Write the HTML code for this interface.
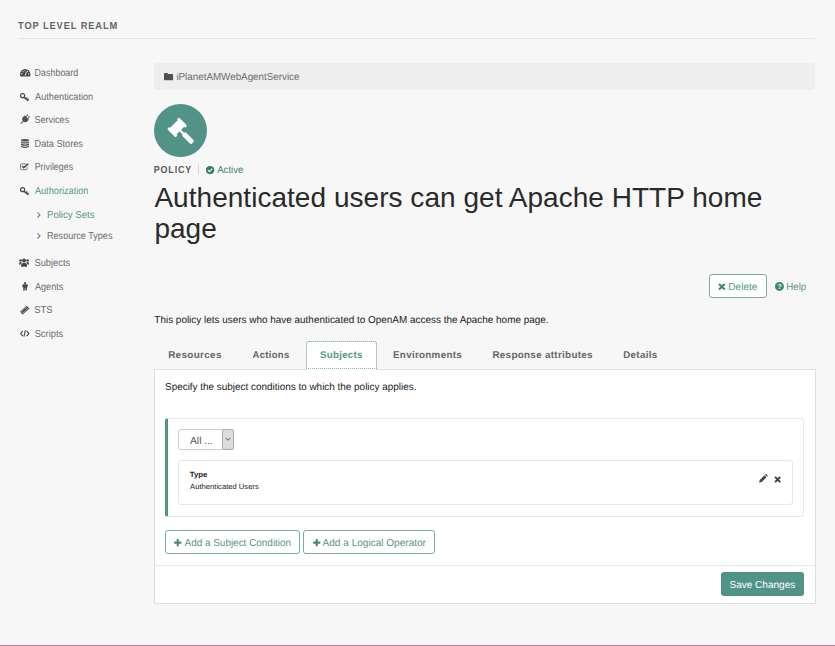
<!DOCTYPE html>
<html lang="en">
<head>
<meta charset="utf-8">
<title>Policy</title>
<style>
*{box-sizing:border-box;}
html,body{margin:0;padding:0;}
body{width:835px;height:646px;overflow:hidden;background:#f7f7f7;font-family:"Liberation Sans",Arial,sans-serif;font-size:10.5px;color:#333;position:relative;}
.abs,.t,svg{position:absolute;}
.t{white-space:nowrap;line-height:14px;transform-origin:0 0;display:block;text-rendering:geometricPrecision;}
svg{overflow:visible;}
.hr{left:18px;top:38px;width:797px;height:1px;background:#e6e6e6;}
.crumb{left:154px;top:62.5px;width:661px;height:27px;background:#eeeeee;border-radius:3px;}
.circle{left:154px;top:104px;width:53.4px;height:53.4px;border-radius:50%;background:#519387;}
.sep{left:198px;top:164px;width:1px;height:10.500px;background:#dadada;}
h1{margin:0;font-weight:normal;font-size:28px;line-height:30.7px;color:#2a2a2a;left:154.4px;top:183.2px;width:670px;position:absolute;letter-spacing:.035px;}
.btn{position:absolute;border:1px solid #78ada1;border-radius:3px;background:#fff;}
.tabactive{left:305.5px;top:340.6px;width:71.3px;height:29.6px;background:#fff;border:1px solid #dcdcdc;border-bottom:none;border-radius:3px 3px 0 0;}
.tabout{left:305.5px;top:340.6px;width:71.3px;height:28.6px;border:1px dotted #86b8ad;border-radius:3px 3px 0 0;}
.panel{left:154px;top:369px;width:661.5px;height:235px;background:#fff;border:1px solid #dedede;}
.well{left:165px;top:418px;width:639px;height:98.5px;border:1px solid #e6e6e6;border-left:3px solid #519387;border-radius:3px;background:#fff;}
.sel{left:178px;top:429px;width:56px;height:21px;border:1px solid #cfcfcf;border-radius:3px;background:#fff;}
.selbtn{left:222px;top:429px;width:12px;height:20.5px;border:1px solid #adadad;border-radius:2px;background:#dcdcdc;}
.item{left:178px;top:460px;width:615px;height:45.4px;border:1px solid #e6e6e6;border-radius:3px;background:#fff;}
.foot{left:155px;top:565px;width:659.5px;height:1px;background:#e8e8e8;}
.save{left:721px;top:572.3px;width:83.3px;height:23.8px;background:#519387;border-radius:3px;}
.bottomline{left:0;top:645px;width:835px;height:1px;background:#c97c9b;}
</style>
</head>
<body>
<div class="abs hr"></div>
<div class="abs crumb"></div>
<div class="abs circle"></div>
<div class="abs sep"></div>
<h1>Authenticated users can get Apache HTTP home page</h1>
<div class="btn" style="left:709px;top:274.2px;width:58px;height:24px;"></div>
<div class="abs panel"></div>
<div class="abs tabactive"></div>
<div class="abs tabout"></div>
<div class="abs well"></div>
<div class="abs sel"></div>
<div class="abs selbtn"></div>
<div class="abs item"></div>
<div class="btn" style="left:165px;top:530.4px;width:135px;height:23.6px;"></div>
<div class="btn" style="left:303px;top:530.4px;width:131.8px;height:23.6px;"></div>
<div class="abs foot"></div>
<div class="abs save"></div>
<div class="abs bottomline"></div>

<!-- sidebar icons -->
<svg style="left:19.5px;top:69.4px;width:10.4px;height:7.5px" viewBox="0 0 14 10"><path d="M0 7A7 7 0 0 1 14 7V8.3Q14 10 12.400 10H1.600Q0 10 0 8.300Z" fill="#484848"/><g fill="#f7f7f7"><circle cx="2.400" cy="6.600" r=".8"/><circle cx="3.900" cy="3.600" r=".8"/><circle cx="7" cy="2.300" r=".8"/><circle cx="10.100" cy="3.600" r=".8"/><circle cx="11.600" cy="6.600" r=".8"/><path d="M6.300 8.200L8.200 3.600L9 4L7.700 8.600Z"/></g></svg>
<svg style="left:19.8px;top:92.7px;width:8.8px;height:8.1px" viewBox="0 0 8.8 8.1"><g fill="none" stroke="#484848"><circle cx="2.600" cy="2.650" r="2.050" stroke-width="1.150"/><path d="M3.900 4.100L8.200 7.800" stroke-width="1.450"/><path d="M6.100 5.900L7.400 4.500M7.500 7.100L8.700 5.800" stroke-width="1.200"/></g></svg>
<svg style="left:19.8px;top:115.200px;width:9.600px;height:9.200px" viewBox="0 0 10 10"><g transform="rotate(45 5 5)" fill="#505050"><rect x="3.100" y="-1.200" width="1.100" height="3.400"/><rect x="5.800" y="-1.200" width="1.100" height="3.400"/><path d="M1.700 1.900H8.300V4.300A3.300 3.300 0 0 1 1.700 4.300Z"/><rect x="4.450" y="7" width="1.100" height="4.400"/></g></svg>
<svg style="left:20.700px;top:139.200px;width:8px;height:9.100px" viewBox="0 0 8 9.100"><g fill="#505050"><ellipse cx="4" cy="1.300" rx="4" ry="1.300"/><path d="M0 2.400Q4 4.100 8 2.400V3.700Q4 5.400 0 3.700ZM0 4.600Q4 6.300 8 4.600V5.900Q4 7.600 0 5.900ZM0 6.800Q4 8.500 8 6.800V7.900Q4 10.200 0 7.900Z"/></g></svg>
<svg style="left:20.2px;top:162.6px;width:8.8px;height:7.2px" viewBox="0 0 8.800 7.200"><path d="M6.200 .9H1.500Q.5 .9 .5 1.900V5.700Q.5 6.700 1.500 6.700H6.200Q7.200 6.700 7.200 5.700V4.300" fill="none" stroke="#6a6a6a" stroke-width=".9"/><path d="M2 3L3.700 4.700L8.300 .9" fill="none" stroke="#484848" stroke-width="1.500"/></svg>
<svg style="left:19.8px;top:186.9px;width:8.8px;height:8.1px" viewBox="0 0 8.8 8.1"><g fill="none" stroke="#484848"><circle cx="2.600" cy="2.650" r="2.050" stroke-width="1.150"/><path d="M3.900 4.100L8.200 7.800" stroke-width="1.450"/><path d="M6.100 5.900L7.400 4.500M7.500 7.100L8.700 5.800" stroke-width="1.200"/></g></svg>
<svg style="left:37px;top:212.2px;width:3.6px;height:5.8px" viewBox="0 0 3.6 5.8"><path d="M.4 .3L3 2.900L.4 5.500" fill="none" stroke="#7e7e7e" stroke-width="1.100"/></svg>
<svg style="left:37px;top:233.2px;width:3.6px;height:5.8px" viewBox="0 0 3.6 5.8"><path d="M.4 .3L3 2.900L.4 5.500" fill="none" stroke="#7e7e7e" stroke-width="1.100"/></svg>
<svg style="left:19.3px;top:258px;width:10.2px;height:9.200px" viewBox="0 0 11 9"><g fill="#484848"><circle cx="5.500" cy="2.300" r="2.100"/><path d="M2.200 9Q1.900 4.700 5.500 4.700Q9.100 4.700 8.800 9Z"/><circle cx="1.700" cy="2.200" r="1.400"/><circle cx="9.300" cy="2.200" r="1.400"/><path d="M0 6.600Q-.1 3.900 1.700 3.900Q2.800 3.900 3.200 4.600Q1.900 5.500 1.900 6.600ZM11 6.600Q11.100 3.900 9.300 3.900Q8.200 3.900 7.800 4.600Q9.100 5.500 9.100 6.600Z"/></g></svg>
<svg style="left:21.5px;top:282.2px;width:6.1px;height:8.6px" viewBox="0 0 6 9"><g fill="#484848"><circle cx="3" cy="1.100" r="1.150"/><path d="M.2 3.300Q.2 2.400 1.100 2.400H4.900Q5.800 2.400 5.800 3.300V5.600H4.900V9H3.300V6.200H2.700V9H1.100V5.600H.2Z"/></g></svg>
<svg style="left:19.7px;top:305.6px;width:9.4px;height:8.2px" viewBox="0 0 10 9"><g transform="rotate(-42 5 4.500)"><rect x=".1" y="2.300" width="9.800" height="4.400" rx=".5" fill="#484848"/><rect x="1.700" y="3.300" width="6.600" height="2.400" fill="none" stroke="#f7f7f7" stroke-width=".5"/></g></svg>
<svg style="left:19.7px;top:330.4px;width:9.4px;height:6.9px" viewBox="0 0 10 7.400"><path d="M2.900 .9L.6 3.700L2.900 6.500M7.100 .9L9.400 3.700L7.100 6.500M5.800 .2L4.200 7.200" fill="none" stroke="#484848" stroke-width="1.200"/></svg>

<!-- folder -->
<svg style="left:164.4px;top:72.9px;width:9.1px;height:7.3px" viewBox="0 0 10 8"><path d="M0 1Q0 0 1 0H3.4Q4.400 0 4.400 1H9Q10 1 10 2V7Q10 8 9 8H1Q0 8 0 7Z" fill="#505050"/></svg>
<!-- gavel -->
<svg style="left:0;top:0;width:835px;height:646px" viewBox="0 0 835 646"><g transform="translate(177.200 127.350) rotate(-45)" fill="#fff"><path d="M-8.300 -4.900Q-8.300 -5.900 -7.300 -5.900H-6.200Q-5.300 -5.900 -5.300 -4.600H5.300Q5.300 -5.900 6.200 -5.900H7.300Q8.300 -5.900 8.300 -4.900V4.900Q8.300 5.900 7.300 5.900H6.200Q5.300 5.900 5.300 4.600H-5.300Q-5.300 5.900 -6.200 5.900H-7.300Q-8.300 5.900 -8.300 4.900Z"/><rect x="-1.100" y="4" width="2.200" height="6"/><rect x="-2.500" y="8.600" width="5" height="13.400" rx="1.900"/></g></svg>
<!-- check circle -->
<svg style="left:205.8px;top:165.9px;width:8.2px;height:8.2px" viewBox="0 0 10 10"><circle cx="5" cy="5" r="5" fill="#2f7b6c"/><path d="M2.400 5.100L4.300 7L7.700 3.300" fill="none" stroke="#f7f7f7" stroke-width="1.500"/></svg>
<!-- delete x -->
<svg style="left:718.1px;top:282.9px;width:7.700px;height:7.500px" viewBox="0 0 8 8"><path d="M1 1L7 7M7 1L1 7" stroke="#3f8476" stroke-width="2.100" fill="none"/></svg>
<!-- help -->
<svg style="left:775.1px;top:282.1px;width:8.900px;height:8.900px" viewBox="0 0 10 10"><circle cx="5" cy="5" r="5" fill="#3f8476"/><text x="5" y="8" text-anchor="middle" font-family="Liberation Sans, sans-serif" font-weight="bold" font-size="8.500" fill="#f7f7f7">?</text></svg>
<!-- select arrow -->
<svg style="left:224.9px;top:436.8px;width:6.2px;height:4.4px" viewBox="0 0 6.2 4.400"><path d="M.7 .9L3.100 3.300L5.500 .9" fill="none" stroke="#505050" stroke-width=".95"/></svg>
<!-- pencil -->
<svg style="left:758.9px;top:474.4px;width:8.8px;height:8.6px" viewBox="0 0 9 9"><path d="M0 9L.7 6.200L5.600 1.300L7.700 3.400L2.800 8.300ZM6.200 .7L6.900 0Q7.300 -.2 7.700 .2L8.800 1.300Q9.200 1.700 9 2.100L8.300 2.800Z" fill="#444"/></svg>
<!-- item x -->
<svg style="left:774.2px;top:475.7px;width:7.3px;height:6.9px" viewBox="0 0 8 8"><path d="M1 1L7 7M7 1L1 7" stroke="#3c3c3c" stroke-width="2.100" fill="none"/></svg>
<!-- plus -->
<svg style="left:173.7px;top:538.7px;width:7.5px;height:7.2px" viewBox="0 0 8 8"><path d="M4 0V8M0 4H8" stroke="#468c7d" stroke-width="2.350" fill="none"/></svg>
<svg style="left:313.1px;top:538.7px;width:7.5px;height:7.2px" viewBox="0 0 8 8"><path d="M4 0V8M0 4H8" stroke="#468c7d" stroke-width="2.350" fill="none"/></svg>

<span class="t" style="left:0;top:20px;font-size:10.2px;font-weight:bold;color:#666;letter-spacing:1px;transform:translateX(18.03px) scaleX(0.9090)">TOP LEVEL REALM</span>
<span class="t" style="left:0;top:67px;font-size:10.1px;font-weight:normal;color:#6b6b6b;transform:translateX(34.62px) scaleX(0.8828)">Dashboard</span>
<span class="t" style="left:0;top:91px;font-size:10.1px;font-weight:normal;color:#6b6b6b;transform:translateX(35.11px) scaleX(0.9083)">Authentication</span>
<span class="t" style="left:0;top:114px;font-size:10.1px;font-weight:normal;color:#6b6b6b;transform:translateX(34.51px) scaleX(0.8952)">Services</span>
<span class="t" style="left:0;top:138px;font-size:10.1px;font-weight:normal;color:#6b6b6b;transform:translateX(34.59px) scaleX(0.9065)">Data Stores</span>
<span class="t" style="left:0;top:161px;font-size:10.1px;font-weight:normal;color:#6b6b6b;transform:translateX(34.67px) scaleX(0.8773)">Privileges</span>
<span class="t" style="left:0;top:185px;font-size:10.1px;font-weight:normal;color:#579789;transform:translateX(34.89px) scaleX(0.9094)">Authorization</span>
<span class="t" style="left:0;top:209px;font-size:10.1px;font-weight:normal;color:#579789;transform:translateX(46.97px) scaleX(0.9516)">Policy Sets</span>
<span class="t" style="left:0;top:230px;font-size:10.1px;font-weight:normal;color:#6b6b6b;transform:translateX(47.00px) scaleX(0.8992)">Resource Types</span>
<span class="t" style="left:0;top:257px;font-size:10.1px;font-weight:normal;color:#6b6b6b;transform:translateX(34.42px) scaleX(0.9247)">Subjects</span>
<span class="t" style="left:0;top:281px;font-size:10.1px;font-weight:normal;color:#6b6b6b;transform:translateX(34.98px) scaleX(0.9008)">Agents</span>
<span class="t" style="left:0;top:304px;font-size:10.1px;font-weight:normal;color:#6b6b6b;transform:translateX(34.31px) scaleX(0.9337)">STS</span>
<span class="t" style="left:0;top:328px;font-size:10.1px;font-weight:normal;color:#6b6b6b;transform:translateX(34.63px) scaleX(0.9262)">Scripts</span>
<span class="t" style="left:0;top:71px;font-size:10.1px;font-weight:normal;color:#6b6b6b;transform:translateX(176.39px) scaleX(0.9722)">iPlanetAMWebAgentService</span>
<span class="t" style="left:0;top:164px;font-size:10.2px;font-weight:bold;color:#5a5a5a;letter-spacing:1px;transform:translateX(153.66px) scaleX(0.8778)">POLICY</span>
<span class="t" style="left:0;top:164px;font-size:10.1px;font-weight:normal;color:#3d8576;transform:translateX(217.14px) scaleX(0.9574)">Active</span>
<span class="t" style="left:0;top:281px;font-size:10.1px;font-weight:normal;color:#579789;transform:translateX(728.20px) scaleX(1.0029)">Delete</span>
<span class="t" style="left:0;top:281px;font-size:10.1px;font-weight:normal;color:#579789;transform:translateX(786.19px) scaleX(0.9692)">Help</span>
<span class="t" style="left:0;top:314px;font-size:10.1px;font-weight:normal;color:#222;transform:translateX(154.34px) scaleX(0.9840)">This policy lets users who have authenticated to OpenAM access the Apache home page.</span>
<span class="t" style="left:0;top:349px;font-size:9.8px;font-weight:bold;color:#666;letter-spacing:0.3px;transform:translateX(168.13px) scaleX(1.0158)">Resources</span>
<span class="t" style="left:0;top:349px;font-size:9.8px;font-weight:bold;color:#666;letter-spacing:0.3px;transform:translateX(252.59px) scaleX(0.9696)">Actions</span>
<span class="t" style="left:0;top:349px;font-size:9.8px;font-weight:bold;color:#579789;letter-spacing:0.3px;transform:translateX(320.09px) scaleX(0.9837)">Subjects</span>
<span class="t" style="left:0;top:349px;font-size:9.8px;font-weight:bold;color:#666;letter-spacing:0.3px;transform:translateX(393.00px) scaleX(1.0013)">Environments</span>
<span class="t" style="left:0;top:349px;font-size:9.8px;font-weight:bold;color:#666;letter-spacing:0.3px;transform:translateX(492.41px) scaleX(1.0059)">Response attributes</span>
<span class="t" style="left:0;top:349px;font-size:9.8px;font-weight:bold;color:#666;letter-spacing:0.3px;transform:translateX(623.26px) scaleX(0.9972)">Details</span>
<span class="t" style="left:0;top:381px;font-size:10.1px;font-weight:normal;color:#222;transform:translateX(165.06px) scaleX(0.9823)">Specify the subject conditions to which the policy applies.</span>
<span class="t" style="left:0;top:435px;font-size:10.1px;font-weight:normal;color:#555;transform:translateX(189.97px) scaleX(1.0254)">All ...</span>
<span class="t" style="left:0;top:468px;font-size:7.5px;font-weight:bold;color:#222;transform:translateX(189.87px) scaleX(1.0362)">Type</span>
<span class="t" style="left:0;top:480px;font-size:7.5px;font-weight:normal;color:#222;transform:translateX(190.11px) scaleX(1.0164)">Authenticated Users</span>
<span class="t" style="left:0;top:537px;font-size:10.1px;font-weight:normal;color:#579789;transform:translateX(184.50px) scaleX(0.9845)">Add a Subject Condition</span>
<span class="t" style="left:0;top:537px;font-size:10.1px;font-weight:normal;color:#579789;transform:translateX(322.58px) scaleX(0.9958)">Add a Logical Operator</span>
<span class="t" style="left:0;top:579px;font-size:10.1px;font-weight:normal;color:#fff;transform:translateX(729.44px) scaleX(0.9945)">Save Changes</span>
</body>
</html>
